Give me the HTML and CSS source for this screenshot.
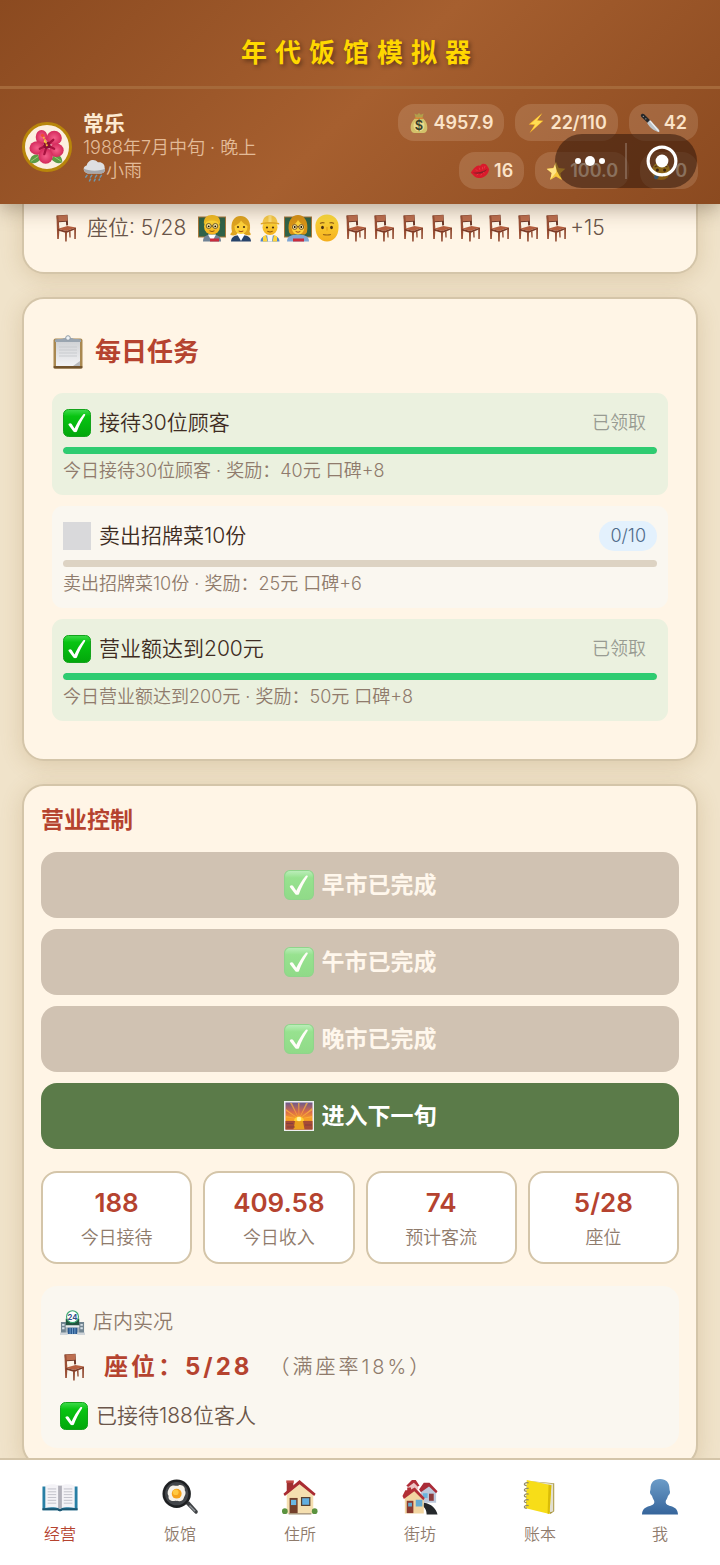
FILE: index.html
```html
<!DOCTYPE html>
<html lang="zh-CN">
<head>
  <meta charset="UTF-8" />
  <meta name="viewport" content="width=device-width, initial-scale=1" />
  <title>年代饭馆模拟器</title>
  <link rel="stylesheet" href="styles.css">
</head>
<body>
  <!-- 图标 -->
  <svg class="sprite" aria-hidden="true">
    <defs>
      <linearGradient id="gCheck" x1="0" y1="0" x2="0" y2="1"><stop offset="0" stop-color="#3fdc4c"/><stop offset=".25" stop-color="#08c412"/><stop offset="1" stop-color="#02a70b"/></linearGradient>
      <linearGradient id="gCheckOff" x1="0" y1="0" x2="0" y2="1"><stop offset="0" stop-color="#bdeebc"/><stop offset=".25" stop-color="#97e28f"/><stop offset="1" stop-color="#90da88"/></linearGradient>
      <linearGradient id="gBust" x1="0" y1="0" x2="0" y2="1"><stop offset="0" stop-color="#6c9cc8"/><stop offset="1" stop-color="#36659b"/></linearGradient>
      <linearGradient id="gSky" x1="0" y1="0" x2="0" y2="1"><stop offset="0" stop-color="#6b5a8c"/><stop offset=".35" stop-color="#d96a4a"/><stop offset=".62" stop-color="#f9a224"/><stop offset="1" stop-color="#b5542c"/></linearGradient>
      <linearGradient id="gFace" x1="0" y1="0" x2="0" y2="1"><stop offset="0" stop-color="#ffdf3e"/><stop offset="1" stop-color="#f4ae1c"/></linearGradient>
      <linearGradient id="gPaper" x1="0" y1="0" x2="0" y2="1"><stop offset="0" stop-color="#cfd1d4"/><stop offset="1" stop-color="#f3f3f5"/></linearGradient>
      <radialGradient id="gPetal"><stop offset="0" stop-color="#f45f8a"/><stop offset="1" stop-color="#d42a5c"/></radialGradient>
    </defs>

    <symbol id="i-check" viewBox="0 0 28 28">
      <rect x=".5" y=".5" width="27" height="27" rx="5" fill="url(#gCheck)" stroke="#14a31c"/>
      <path d="M5.800 14.800c.9-.8 2.200-.7 2.900.3l2.800 4.300C14 14.300 16.800 9.500 20.200 5.500c.9-.8 2.700-.3 1.800 1-3.200 4.700-5.800 10-8 15.800-.6 1.200-3 1.200-3.600.1L5.600 16c-.3-.5-.2-.9.200-1.200z" fill="#fff"/>
    </symbol>

    <symbol id="i-check-off" viewBox="0 0 28 28">
      <rect x=".5" y=".5" width="27" height="27" rx="5" fill="url(#gCheckOff)" stroke="#8fd58b"/>
      <path d="M5.800 14.800c.9-.8 2.200-.7 2.900.3l2.800 4.300C14 14.300 16.800 9.500 20.200 5.500c.9-.8 2.700-.3 1.800 1-3.200 4.700-5.800 10-8 15.800-.6 1.200-3 1.200-3.600.1L5.600 16c-.3-.5-.2-.9.200-1.200z" fill="#fffdf8"/>
    </symbol>

    <symbol id="i-chair" viewBox="0 0 28 28">
      <path d="M4.500 1.500 15.500.8l.6 10.500-9 1.300h-1.400z" fill="#6b3425"/>
      <path d="M4.900 1.700 15.200 1l.4 5.700-10.300.8z" fill="#bd6f50"/>
      <path d="M6.800 8.300 14 7.700l.2 4.600-7 1z" fill="#fff6e8"/>
      <path d="M4.500 1.700h1.800l1.100 13.500-.6 9.800H5.200z" fill="#9a5035"/>
      <path d="M5.800 14.800 15.500 12l8.500 1.500-9.700 3.400z" fill="#b7603f"/>
      <path d="M5.800 14.800v1.800l8.500 2.400 9.700-4v-1.500l-9.700 3.400z" fill="#7d3c28"/>
      <path d="M13 18h2l-.3 9.500h-1.500zM22.200 14.500H24L23.800 25h-1.500zM17 17.200h1.500l.2 6.300h-1.300z" fill="#91492f"/>
    </symbol>

    <symbol id="i-teacher" viewBox="0 0 28 28">
      <rect y="2.500" width="28" height="21" fill="#a8783c"/><rect x="1" y="3.500" width="26" height="19" fill="#2f6248"/>
      <path d="M5 27.500c0-5.500 4-7 9-7s9 1.500 9 7z" fill="#6f8295"/><path d="M10 20.500h8L14.500 27h-1z" fill="#fff"/><path d="M12 24.500h9v3h-9z" fill="#c92b3c"/>
      <circle cx="14" cy="12.500" r="8" fill="url(#gFace)"/><path d="M6 10.500C5 3 10 .5 14.500 1 20 1 23 5 22 10.500c-2-3-4-4-8-4s-6 1-8 4z" fill="#f3bd25"/>
      <g fill="#ffe99a" stroke="#4f4325" stroke-width=".8"><circle cx="10.700" cy="12" r="2.500"/><circle cx="17.300" cy="12" r="2.500"/><path d="M13 12h2"/></g>
      <circle cx="10.700" cy="12.300" r=".9"/><circle cx="17.300" cy="12.300" r=".9"/><path d="M11.500 16.800q2.500 1.500 5 0" fill="none" stroke="#8a5411"/>
    </symbol>

    <symbol id="i-office" viewBox="0 0 28 28">
      <path d="M4 27.500c0-4.500 4-6.500 10-6.500s10 2 10 6.500z" fill="#27436b"/><path d="M10 20h8l-4 7z" fill="#fff"/>
      <path d="M5 18C3 8 7 2 13.500 2S25 8 22.500 18c1 1 1.500 2 1 3-4 1-7-1-7-2h-6c0 2-4 3-7 2-.5-1 .5-2 1.500-3z" fill="#e0a520"/>
      <path d="M7.500 12C10 11 13 9 14 6.500c2 2.500 4 4 6.500 5.500 0 5-2.500 8-6.500 8s-6.500-3-6.500-8z" fill="#ffd23a"/>
      <circle cx="11" cy="13" r="1.100" fill="#4b3115"/><circle cx="17" cy="13" r="1.100" fill="#4b3115"/><path d="M11.700 17q2.300 1.500 4.600 0" fill="none" stroke="#a14a16"/>
    </symbol>

    <symbol id="i-worker" viewBox="0 0 28 28">
      <path d="M4.500 27.500c0-4.500 4.500-6.500 9.500-6.500s9.500 2 9.500 6.500z" fill="#5586c3"/><path d="M7 22.500 10 21l1.500 6.500H7zM21 22.500 18 21l-1.500 6.500H21z" fill="#ffd53d"/><path d="M11 20.500h6l-1 7h-4z" fill="#f5f5f5"/>
      <circle cx="14" cy="13.500" r="7.500" fill="url(#gFace)"/>
      <path d="M6.500 9.500C6.500 4 10 1.200 14 1.200s7.500 2.800 7.500 8.300z" fill="#f8cb4a"/><path d="M12.500 1h3v7h-3z" fill="#ffe07b"/><path d="M4.800 9c5-1.500 13.400-1.500 18.400 0v1.500c-5-1-13.400-1-18.400 0z" fill="#e5ac2c"/>
      <circle cx="11" cy="13.500" r="1.100" fill="#4b3115"/><circle cx="17" cy="13.500" r="1.100" fill="#4b3115"/><path d="M11.300 17.300q2.700 1.500 5.400 0" fill="none" stroke="#8a5411"/>
    </symbol>

    <symbol id="i-teacher-f" viewBox="0 0 28 28">
      <rect y="2.500" width="28" height="21" fill="#a8783c"/><rect x="1" y="3.500" width="26" height="19" fill="#2f6248"/>
      <path d="M3 27.500c0-5.500 5-7 11-7s11 1.500 11 7z" fill="#7fa6d4"/><path d="M9 24.500h11v3H9z" fill="#c92b3c"/>
      <path d="M5 18C3 7 8 1 14 1s11 6 9 17c-1 3-4 3-6 2h-6c-2 1-5 1-6-2z" fill="#d99417"/>
      <path d="M7.500 12C10 11 13 8 14 6c2 3 4 4.500 6.500 6 0 5-2.500 8.500-6.500 8.500S7.500 17 7.500 12z" fill="#ffd23a"/>
      <g fill="#ffe99a" stroke="#5d3a25" stroke-width=".8"><circle cx="10.700" cy="13" r="2.400"/><circle cx="17.300" cy="13" r="2.400"/><path d="M13 12.700h2"/></g>
      <circle cx="10.700" cy="13" r=".9"/><circle cx="17.300" cy="13" r=".9"/><path d="M11.700 17.500q2.300 1.500 4.600 0" fill="none" stroke="#a14a16"/>
    </symbol>

    <symbol id="i-bald" viewBox="0 0 28 28">
      <path d="M2.500 14C1.500 6 7 .6 14 .6S26.500 6 25.500 14C25.500 22 20.500 27.400 14 27.400S2.500 22 2.500 14z" fill="url(#gFace)"/>
      <ellipse cx="9.500" cy="13.500" rx="1.400" ry="1.800" fill="#4b3115"/><ellipse cx="18.500" cy="13.500" rx="1.400" ry="1.800" fill="#4b3115"/>
      <path d="M7 9.500q2.500-1.500 4.500-.5M16.500 9q2-1 4.500.5M10 20.500q4 1 8 0" fill="none" stroke="#9a6516" stroke-width="1.200"/><path d="M14 13v3.500" stroke="#e09a16"/>
    </symbol>

    <symbol id="i-clipboard" viewBox="0 0 32 34">
      <rect x="1.500" y="3.500" width="29" height="30" rx="2" fill="#a98850"/><rect x="1.500" y="31" width="29" height="2.500" rx="1" fill="#72532c"/>
      <path d="M4 5.500h24V31H4z" fill="url(#gPaper)"/><path d="m21 31 7-5v5z" fill="#b9babd"/>
      <path d="M7 12h18M7 15h18M7 18h18M7 21h18" stroke="#c9cbcf" stroke-width="1"/>
      <path d="M3 7V4.500c4-1 7 0 9-1.500h8c2 1.500 5 .5 9 1.500V7z" fill="#9aa5b0"/><circle cx="16" cy="3" r="2.300" fill="#eef2f5" stroke="#8f9ba7"/>
    </symbol>

    <symbol id="i-sunrise" viewBox="0 0 30 30">
      <rect width="30" height="30" fill="#eef0f2"/><rect x="1.500" y="1.500" width="27" height="27" fill="url(#gSky)"/>
      <path d="M15 18 2 8v2zM15 18 6 2h2zM15 18 14 2h1.500zM15 18 22 2h2zM15 18 28 7v2.500zM15 18 2 15v1.500zM15 18l13-3v1.500z" fill="#ffb83a" opacity=".7"/>
      <path d="M1.500 20h27v8.500h-27z" fill="#a54b35"/><path d="M11 20h8l1.500 8.500h-11z" fill="#e9a01e"/><path d="M10 20a5 4.500 0 0 1 10 0z" fill="#ffd02f"/><circle cx="15" cy="18" r="2.300" fill="#fff3a0"/>
      <path d="M2 22.500h7M21 24h7M3 26h8" stroke="#7c3b44" stroke-width=".8"/>
    </symbol>

    <symbol id="i-bolt" viewBox="0 0 20 24">
      <path d="M17 1 2 13.500l6.500.5L3 23l15-13.500-6.500-.4z" fill="#ffbf28"/><path d="M16 2.500 4 13l5.500.3L6 19.500 16.500 10l-6-.4z" fill="#ffdd54"/>
    </symbol>

    <symbol id="i-knife" viewBox="0 0 24 24">
      <path d="M1 2.500C2 .5 4 .5 5 1.500l8 8-3 3-8.500-8C1 4 1 3 1 2.500z" fill="#262729"/><circle cx="4" cy="4" r=".8" fill="#aaa"/><circle cx="7" cy="7" r=".8" fill="#aaa"/>
      <path d="m12 8.500 10 10.500c1.500 1.500 1.500 3 1 4-5-1-11-5-14.500-11z" fill="#bcc2c8"/><path d="m12 9.500 10.500 12.500" stroke="#f0f2f4" stroke-width="1.500"/>
    </symbol>

    <symbol id="i-kiss" viewBox="0 0 24 20">
      <path d="M1 12C5 6 9 2 12 4c2-3 5-3 7-2 2 2 3 4 4 6-1 7-7 11-13 10.500C6 18 4 15 1 12z" fill="#d91a2b"/>
      <path d="M3 12c6 0 13-1 18-4.500-4 5.500-11 7-18 4.500z" fill="#842029"/><path d="M7 8l2 2M11 6l1 3M15 5v3M18 4l-1 3M8 15l2-1.500M13 15.500l1-2M17 13l-1-2" stroke="#ee4a53" stroke-width=".7"/>
    </symbol>

    <symbol id="i-star" viewBox="0 0 24 24">
      <path d="m12 1 3.200 7.500 8 .8-6 5.500 1.800 8L12 18.700 5 22.800l1.800-8-6-5.500 8-.8z" fill="#f7c83b"/><path d="m12 2 .3 11.500L5 22.500l2-8-6-5 8-.8z" fill="#ffe484"/>
    </symbol>

    <symbol id="i-cry" viewBox="0 0 22 22">
      <circle cx="11" cy="11" r="10" fill="url(#gFace)"/><path d="M4 6.500 8 5M18 6.500 14 5" stroke="#80531e" stroke-width="1.300"/><circle cx="7" cy="10" r="1.700" fill="#4b3115"/><circle cx="15" cy="10" r="1.700" fill="#4b3115"/><path d="M7.500 17q3.500-4 7 0" stroke="#80531e" stroke-width="1.500" fill="none"/><path d="M6 12c3 4 3 7 .5 8s-5-2-.5-8z" fill="#3b9fe8"/>
    </symbol>

    <symbol id="i-flower" viewBox="0 0 40 40">
      <path d="M1 37c0-6 3-9 9-9l3 6c-4 4-8 5-12 3zM37 37c0-6-3-9-9-9l-3 6c4 4 8 5 12 3z" fill="#5d9b45"/><path d="m2 36 9-6M36 36l-9-6" stroke="#a3cf7a"/>
      <g fill="url(#gPetal)">
        <ellipse cx="14" cy="9" rx="6.500" ry="8"/>
        <ellipse cx="28" cy="10" rx="8.500" ry="8"/>
        <ellipse cx="9" cy="21" rx="8.500" ry="7.500"/>
        <ellipse cx="30.500" cy="23.500" rx="8" ry="7.500"/>
        <ellipse cx="18.500" cy="30" rx="8" ry="8.500"/>
      </g>
      <path d="M20 18 12 22M20 18l-3 10M20 18l8 4M20 18l7-6" stroke="#a8123f" stroke-width="2.500" stroke-linecap="round"/>
      <circle cx="20" cy="18" r="4" fill="#8c0d35"/><path d="M20 19c-1-4-2-7-4-10" stroke="#f6bd35" stroke-width="2" stroke-dasharray="2 1" fill="none"/><circle cx="15" cy="7" r="1.800" fill="#f04e35"/><circle cx="17.500" cy="14" r="1.200" fill="#ffd64a"/>
    </symbol>

    <symbol id="i-rain" viewBox="0 0 24 24">
      <path d="M5 15c-5-1-6-7-1-8.500C5 1 12-1 15.500 3.500 20 2.500 23 6 22.500 9c1.500 3-.5 6-3.500 6z" fill="#dedfe2"/><path d="M5 15c-3-.5-4.500-3-4-5 4 3 18 3 22 0 .3 3-1.500 5-4 5z" fill="#a6a7ab"/>
      <path d="m4.500 16.500-2 3M9.500 16.500l-2 3M14.500 16.500l-2 3M19.500 16.500l-2 3M8 20.500l-1.500 3M13 20.500l-1.500 3M17.500 20.500l-1 2" stroke="#6f98ad" stroke-width="1.500"/>
    </symbol>

    <symbol id="i-book" viewBox="0 0 38 38">
      <path d="M.5 8h37v25h-16q-2.500 2-5 0H.5z" fill="#287fa5"/><path d="M.5 31h37v2h-16q-2.500 2-5 0H.5z" fill="#1d5570"/>
      <path d="M3.500 7c5-2 11-2 15.500.5v24c-4.500-2-10.500-2-15.500-1zM34.500 7c-5-2-11-2-15.500.5v24c4.500-2 10.500-2 15.500-1z" fill="#f4f3f7"/><path d="M17 7q2-.5 2 .5v24q-1-1-2-1zM21 7q-2-.5-2 .5v24q1-1 2-1z" fill="#b1b0b9"/>
      <path d="M6 10.500h9M6 13.500h9M6 16.500h9M6 19.500h9M6 22.500h9M6 25.500h9M23 10.500h9M23 13.500h9M23 16.500h9M23 19.500h9M23 22.500h9M23 25.500h9" stroke="#b3b3bd" stroke-width=".8"/>
    </symbol>

    <symbol id="i-pan" viewBox="0 0 38 38">
      <path d="m25 26 3.500-2.500 9 10c1 2-1 4-2.500 3z" fill="#3e4043"/><path d="m29 28 6 6" stroke="#92979c" stroke-width="1.500"/>
      <circle cx="15.500" cy="15.500" r="15" fill="#1e2022"/><circle cx="15.500" cy="15.500" r="12.300" fill="#43464a"/>
      <path d="M8 9c3-4 7-1 9-2 4-2 8 2 7 5 2 3 0 6-1 8-1 5-7 3-9 3-4 1-8-1-7-5-2-3-1-6 1-9z" fill="#f6f2ea"/><circle cx="15.500" cy="15.500" r="5.200" fill="#f5a21c"/><circle cx="14.500" cy="14" r="3" fill="#ffc942"/>
    </symbol>

    <symbol id="i-house" viewBox="0 0 38 38">
      <path d="M5 3h7v12H5z" fill="#9e3030"/><path d="M4.500 1.500h8V4h-8z" fill="#c54a45"/>
      <path d="M5 16 18.500 4 33 16v20.500H5z" fill="#f5dfb0"/><path d="M1.500 15.500 18.500 1l17 14.500-1.500 2.500L18.500 5.500 3 18z" fill="#a92c32"/>
      <path d="M8 20h8.500v16.500H8z" fill="#74402b"/><path d="M9.500 22h5.500v5.500H9.500z" fill="#69b8e4"/><path d="M20 19h10v9.500H20z" fill="#59402e"/><path d="M21.300 20.300h7.400v6.900h-7.400z" fill="#62aee0"/>
      <circle cx="3" cy="34" r="3" fill="#5b9340"/><circle cx="34.500" cy="34" r="3" fill="#5b9340"/><path d="M7 36h24v1.500H7z" fill="#a8967d"/>
    </symbol>

    <symbol id="i-houses" viewBox="0 0 38 38">
      <path d="M7 6 12 2l5 4v5H7z" fill="#edc4c4"/><path d="m4.500 7 6-6h4l4 6-2 1-4-4-6 4.500z" fill="#b12e39"/>
      <path d="M20 12 28.500 5 36 13v12H20z" fill="#bdc9dc"/><path d="m18 11 5-7h6l8.500 9-1.500 2-7.500-7-8.500 6z" fill="#aa2c38"/><path d="M28.500 15.500h5V23h-5z" fill="#8d3b3c"/><path d="M22 15h5v5h-5z" fill="#6bb4dd"/>
      <path d="M23 25c8 1 13 6 14.500 12.500H26c0-5-2-7-4-9z" fill="#25282b"/>
      <path d="M3 18 12 10l11 10v16.500H3z" fill="#f2d5a1"/><path d="m.5 18 3-6h2V9h4v2l4-2 10.500 11-1.500 2.500L13 13 2 21z" fill="#b22f35"/>
      <path d="M5 23h7v13H5z" fill="#8b3a30"/><path d="M6.500 25h4v4h-4zM14.500 22h7v7h-7z" fill="#65abd1"/>
    </symbol>

    <symbol id="i-note" viewBox="0 0 38 38">
      <path d="M6 2 34 4.500V34l-4 3-2-3z" fill="#a79336"/><path d="m8 2 24 3 1-.5V34L30 35z" fill="#e2dfd2"/>
      <path d="M5 1 31 6.500 29 37 4 31z" fill="#f7dd18"/><path d="m28 6 3 .5L29 37l-2-.5z" fill="#d9bc08"/>
      <path d="M7 4c-5-1-6 3-2 3M7 10c-5-1-6 3-2 3M7 16c-5-1-6 3-2 3M7 22c-5-1-6 3-2 3M7 28c-5-1-6 3-2 3" fill="none" stroke="#948b68" stroke-width="1.300"/>
    </symbol>

    <symbol id="i-bust" viewBox="0 0 38 38">
      <path d="M19 0c6.500 0 10 4 10 10 0 2.500 1 3 .4 5-.5 1.500-1.500 2-2 3-.8 3-2.400 4.500-2.400 6 0 3 2 3.500 5 4.500 5 1.500 7.800 3.500 8 9H0c.2-5.500 3-7.500 8-9 3-1 5-1.500 5-4.500 0-1.500-1.600-3-2.400-6-.5-1-1.500-1.500-2-3C8 13 9 12.500 9 10 9 4 12.500 0 19 0z" fill="url(#gBust)"/>
    </symbol>
  </svg>

  <div class="app">
    <header class="header">
      <h1 class="title">年代饭馆模拟器</h1>
      <div class="status">
        <div class="player">
          <div class="avatar"><svg><use href="#i-flower"/></svg></div>
          <div class="player-info">
            <div class="player-name">常乐</div>
            <div class="player-date">1988年7月中旬 · 晚上</div>
            <div class="player-date weather"><svg><use href="#i-rain"/></svg>小雨</div>
          </div>
        </div>
        <div class="chips">
          <span class="chip">
            <svg viewBox="0 0 20 24">
              <path d="M5 1.500 8 3l2-2 2 2 3-1.500L13.500 7h-7z" fill="#b0a04c"/><path d="M6.500 6h7c4.500 4 6 8 5.500 12.500-.3 3-2 4.500-4 4.500H5c-2 0-3.700-1.500-4-4.500C.5 14 2 10 6.500 6z" fill="#d3c16a"/><path d="M5.500 6.700h9" stroke="#d47b2f" stroke-width="1.500"/>
              <circle cx="10" cy="15" r="6" fill="#eadb8c"/><text class="money-sign" x="10" y="20" text-anchor="middle">$</text>
            </svg>4957.9
          </span>
          <span class="chip"><svg><use href="#i-bolt"/></svg>22/110</span>
          <span class="chip"><svg><use href="#i-knife"/></svg>42</span>
          <span class="chip"><svg><use href="#i-kiss"/></svg>16</span>
          <span class="chip"><svg><use href="#i-star"/></svg>100.0</span>
          <span class="chip"><svg><use href="#i-cry"/></svg>0</span>
        </div>
      </div>
      <div class="capsule">
        <button class="capsule-btn" aria-label="更多"><svg class="dots" viewBox="0 0 32 12"><circle cx="4" cy="6" r="3"/><circle cx="16" cy="6" r="5"/><circle cx="28" cy="6" r="3"/></svg></button>
        <button class="capsule-btn" aria-label="关闭"><svg class="target" viewBox="0 0 30 30"><circle cx="15" cy="15" r="13" fill="none" stroke="#fff" stroke-width="3"/><circle cx="15" cy="15" r="6"/></svg></button>
      </div>
    </header>

    <main class="main">
      <section class="card card-seats">
        <svg class="icon"><use href="#i-chair"/></svg>
        <span class="seats-label">座位: 5/28</span>
        <div class="seats">
          <svg class="icon"><use href="#i-teacher"/></svg>
          <svg class="icon"><use href="#i-office"/></svg>
          <svg class="icon"><use href="#i-worker"/></svg>
          <svg class="icon"><use href="#i-teacher-f"/></svg>
          <svg class="icon"><use href="#i-bald"/></svg>
          <svg class="icon"><use href="#i-chair"/></svg>
          <svg class="icon"><use href="#i-chair"/></svg>
          <svg class="icon"><use href="#i-chair"/></svg>
          <svg class="icon"><use href="#i-chair"/></svg>
          <svg class="icon"><use href="#i-chair"/></svg>
          <svg class="icon"><use href="#i-chair"/></svg>
          <svg class="icon"><use href="#i-chair"/></svg>
          <svg class="icon"><use href="#i-chair"/></svg>
        </div>
        <span>+15</span>
      </section>

      <section class="card card-tasks">
        <h2 class="tasks-title"><svg><use href="#i-clipboard"/></svg>每日任务</h2>
        <div class="task done">
          <div class="task-row">
            <svg class="icon"><use href="#i-check"/></svg>
            <span class="task-name">接待30位顾客</span>
            <span class="task-state">已领取</span>
          </div>
          <div class="bar"><div class="bar-fill" style="width: 100%"></div></div>
          <p class="task-desc">今日接待30位顾客 · 奖励：40元 口碑+8</p>
        </div>
        <div class="task">
          <div class="task-row">
            <span class="icon box"></span>
            <span class="task-name">卖出招牌菜10份</span>
            <span class="task-state count">0/10</span>
          </div>
          <div class="bar"><div class="bar-fill" style="width: 0%"></div></div>
          <p class="task-desc">卖出招牌菜10份 · 奖励：25元 口碑+6</p>
        </div>
        <div class="task done">
          <div class="task-row">
            <svg class="icon"><use href="#i-check"/></svg>
            <span class="task-name">营业额达到200元</span>
            <span class="task-state">已领取</span>
          </div>
          <div class="bar"><div class="bar-fill" style="width: 100%"></div></div>
          <p class="task-desc">今日营业额达到200元 · 奖励：50元 口碑+8</p>
        </div>
      </section>

      <section class="card card-control">
        <h2 class="control-title">营业控制</h2>
        <div class="actions">
          <button class="action" disabled><svg><use href="#i-check-off"/></svg>早市已完成</button>
          <button class="action" disabled><svg><use href="#i-check-off"/></svg>午市已完成</button>
          <button class="action" disabled><svg><use href="#i-check-off"/></svg>晚市已完成</button>
          <button class="action"><svg><use href="#i-sunrise"/></svg>进入下一旬</button>
        </div>
        <div class="stats">
          <div class="stat"><div class="stat-num">188</div><div class="stat-label">今日接待</div></div>
          <div class="stat"><div class="stat-num">409.58</div><div class="stat-label">今日收入</div></div>
          <div class="stat"><div class="stat-num">74</div><div class="stat-label">预计客流</div></div>
          <div class="stat"><div class="stat-num">5/28</div><div class="stat-label">座位</div></div>
        </div>
        <div class="live">
          <div class="live-title">
            <svg viewBox="0 0 26 26">
              <path d="M1 12.500h24V25H1z" fill="#a9b4bb"/><path d="M1 12.500h5V25H1zM20 12.500h5V25h-5z" fill="#728591"/><path d="M2.200 14.500h2.500v2H2.200zm0 3.500h2.500v2H2.200zm19-3.500h2.500v2h-2.500zm0 3.500h2.500v2h-2.500z" fill="#d7e1e8"/>
              <path d="M6 9h14v7H6z" fill="#21543f"/><path d="M6 16h14v2H6z" fill="#e7eaec"/><path d="M8 18.500h10V25H8z" fill="#29598f"/><path d="M10.500 18.500V25M13 18.500V25M15.500 18.500V25" stroke="#86b0d8" stroke-width=".8"/>
              <path d="M0 23.500h8V26H0zM18 23.500h8V26h-8z" fill="#d0d5d9"/>
              <circle cx="13" cy="7" r="6.200" fill="#fff" stroke="#3ba771" stroke-width="1.200"/><text class="store-num" x="13" y="10" text-anchor="middle">24</text>
            </svg>店内实况
          </div>
          <div class="live-seats"><svg class="icon"><use href="#i-chair"/></svg><strong>座位：5/28</strong><span class="rate">（满座率18%）</span></div>
          <div class="live-served"><svg class="icon"><use href="#i-check"/></svg>已接待188位客人</div>
        </div>
      </section>
    </main>

    <nav class="tabs">
      <a class="tab active" href="#"><svg><use href="#i-book"/></svg>经营</a>
      <a class="tab" href="#"><svg><use href="#i-pan"/></svg>饭馆</a>
      <a class="tab" href="#"><svg><use href="#i-house"/></svg>住所</a>
      <a class="tab" href="#"><svg><use href="#i-houses"/></svg>街坊</a>
      <a class="tab" href="#"><svg><use href="#i-note"/></svg>账本</a>
      <a class="tab" href="#"><svg><use href="#i-bust"/></svg>我</a>
    </nav>
  </div>
</body>
</html>
```
FILE: styles.css
```css
* { box-sizing: border-box; margin: 0; padding: 0; }
body { font-family: Inter, "Noto Sans CJK SC", sans-serif; font-size: 21px; line-height: 30px; font-weight: 350; color: #3e2c22; background: #f0e3ca; }
svg { display: block; flex: none; }
.sprite { position: absolute; width: 0; height: 0; }
.store-num { font-size: 8px; font-weight: 700; fill: #34518a; }
.money-sign { font-size: 14px; font-weight: 600; fill: #38402a; }
.icon { width: 28px; height: 28px; }

.app { height: 100vh; display: flex; flex-direction: column; }

/* 顶部 */
.header { position: relative; z-index: 2; flex: none; background: linear-gradient(135deg, #8b4a20 0%, #a65f2f 50%, #8b4a20 100%); box-shadow: 0 4px 20px rgba(60, 40, 20, .4); }
.title { height: 89px; padding-top: 18px; line-height: 70px; text-align: center; font-size: 26px; font-weight: 700; letter-spacing: 8px; color: #ffd700; text-shadow: 2px 2px 4px rgba(0, 0, 0, .4); border-bottom: 3px solid #a5693a; }
.status { height: 115px; padding: 0 22px; display: flex; align-items: center; justify-content: space-between; }
.player { display: flex; align-items: center; gap: 11px; }
.avatar { width: 50px; height: 50px; border: 3px solid #b8860b; border-radius: 50%; background: #fcefe0; display: flex; align-items: center; justify-content: center; }
.avatar svg { width: 36px; height: 36px; }
.player-name { font-size: 21px; font-weight: 700; line-height: 24px; color: #fdebd2; }
.player-date { font-size: 18px; line-height: 23px; color: #e3bb98; }
.weather { display: flex; align-items: center; }
.weather svg { width: 23px; height: 23px; }
.chips { display: flex; flex-wrap: wrap; justify-content: flex-end; gap: 11px; width: 310px; }
.chip { display: flex; align-items: center; gap: 4px; height: 37px; padding: 0 11px; border-radius: 16px; background: rgba(255, 235, 215, .15); font-size: 18px; font-weight: 600; color: #fbe3c8; }
.chip svg { width: 20px; height: 22px; }

.capsule { position: absolute; right: 23px; bottom: 16px; width: 142px; height: 54px; display: flex; align-items: center; border-radius: 27px; background: rgba(50, 24, 10, .56); }
.capsule-btn { flex: 1; height: 36px; display: flex; align-items: center; justify-content: center; border: 0; background: none; }
.capsule-btn + .capsule-btn { border-left: 2px solid rgba(255, 255, 255, .2); }
.capsule svg { fill: #fff; }
.dots { width: 32px; height: 12px; }
.target { width: 32px; height: 32px; }

/* 内容 */
.main { flex: 1; min-height: 0; overflow-y: auto; scrollbar-width: none; padding: 0 22px; }
.card { margin-bottom: 23px; background: #fff5e6; border: 2px solid #d4c5a9; border-radius: 22px; box-shadow: 0 4px 22px rgba(139, 100, 40, .2); }
.card-seats { display: flex; align-items: center; height: 70px; padding: 0 28px 20px; border-top: 0; border-radius: 0 0 22px 22px; color: #6b564a; }
.seats-label { margin: 0 12px 0 7px; }
.seats { display: flex; justify-content: space-between; width: 372px; }

.card-tasks { padding: 28px 28px 27px; }
.tasks-title { display: flex; align-items: center; gap: 11px; height: 50px; margin-bottom: 16px; font-size: 26px; font-weight: 700; color: #b5432f; }
.tasks-title svg { width: 32px; height: 34px; }
.task { margin-bottom: 11px; padding: 14px 11px 11px; border-radius: 11px; background: #faf7f0; }
.task.done { background: #ebf1df; }
.task-row { display: flex; align-items: center; gap: 8px; height: 32px; }
.task-name { flex: 1; }
.box { background: #d9d9db; }
.task-state { padding: 0 11px; font-size: 18px; color: #989b92; }
.task-state.count { color: #4f6b8a; background: #e3f1fd; border-radius: 15px; }
.bar { height: 7px; margin: 8px 0 4px; border-radius: 4px; background: #ddd3c3; overflow: hidden; }
.bar-fill { height: 100%; border-radius: 4px; background: #2ecc71; }
.task-desc { font-size: 18px; line-height: 26px; color: #8f7b6c; }

.card-control { padding: 17px; margin-bottom: 0; }
.control-title { margin-bottom: 15px; line-height: 34px; font-size: 23px; font-weight: 700; color: #b5432f; }
.actions { display: flex; flex-direction: column; gap: 11px; }
.action { height: 66px; display: flex; align-items: center; justify-content: center; gap: 8px; border: 0; border-radius: 16px; background: #5b7b49; color: #fff; font-family: inherit; font-size: 23px; line-height: 30px; font-weight: 600; }
.action svg { width: 30px; height: 30px; }
.action:disabled { background: #d0c2b2; color: #fff7ec; }
.stats { display: grid; grid-template-columns: repeat(4, 1fr); gap: 11px; margin: 22px 0; }
.stat { height: 93px; padding-top: 11px; border: 2px solid #d4c5a9; border-radius: 16px; background: #fff; text-align: center; }
.stat-num { font-size: 26px; line-height: 38px; font-weight: 600; color: #b5432f; }
.stat-label { font-size: 18px; line-height: 32px; color: #8f7b6c; }

.live { padding: 19px 19px 11px; border-radius: 16px; background: #faf7f0; }
.live-title, .live-seats, .live-served { display: flex; align-items: center; }
.live-title { gap: 8px; height: 34px; font-size: 20px; color: #8f7b6c; }
.live-title svg { width: 25px; height: 25px; }
.live-seats { height: 56px; letter-spacing: 3px; font-size: 24px; color: #b5432f; }
.live-seats .icon { margin-right: 16px; }
.rate { margin-left: 17px; font-size: 20px; color: #8f7b6c; }
.live-served { gap: 8px; height: 42px; color: #6b564a; }

/* 底部导航 */
.tabs { position: relative; z-index: 2; flex: none; display: flex; height: 107px; background: #fff; border-top: 2px solid #d4c5a9; }
.tab { flex: 1; display: flex; flex-direction: column; align-items: center; gap: 7px; padding-top: 19px; font-size: 16px; line-height: 24px; color: #8f7b6c; text-decoration: none; }
.tab svg { width: 36px; height: 36px; }
.tab.active { color: #b5432f; }
```
